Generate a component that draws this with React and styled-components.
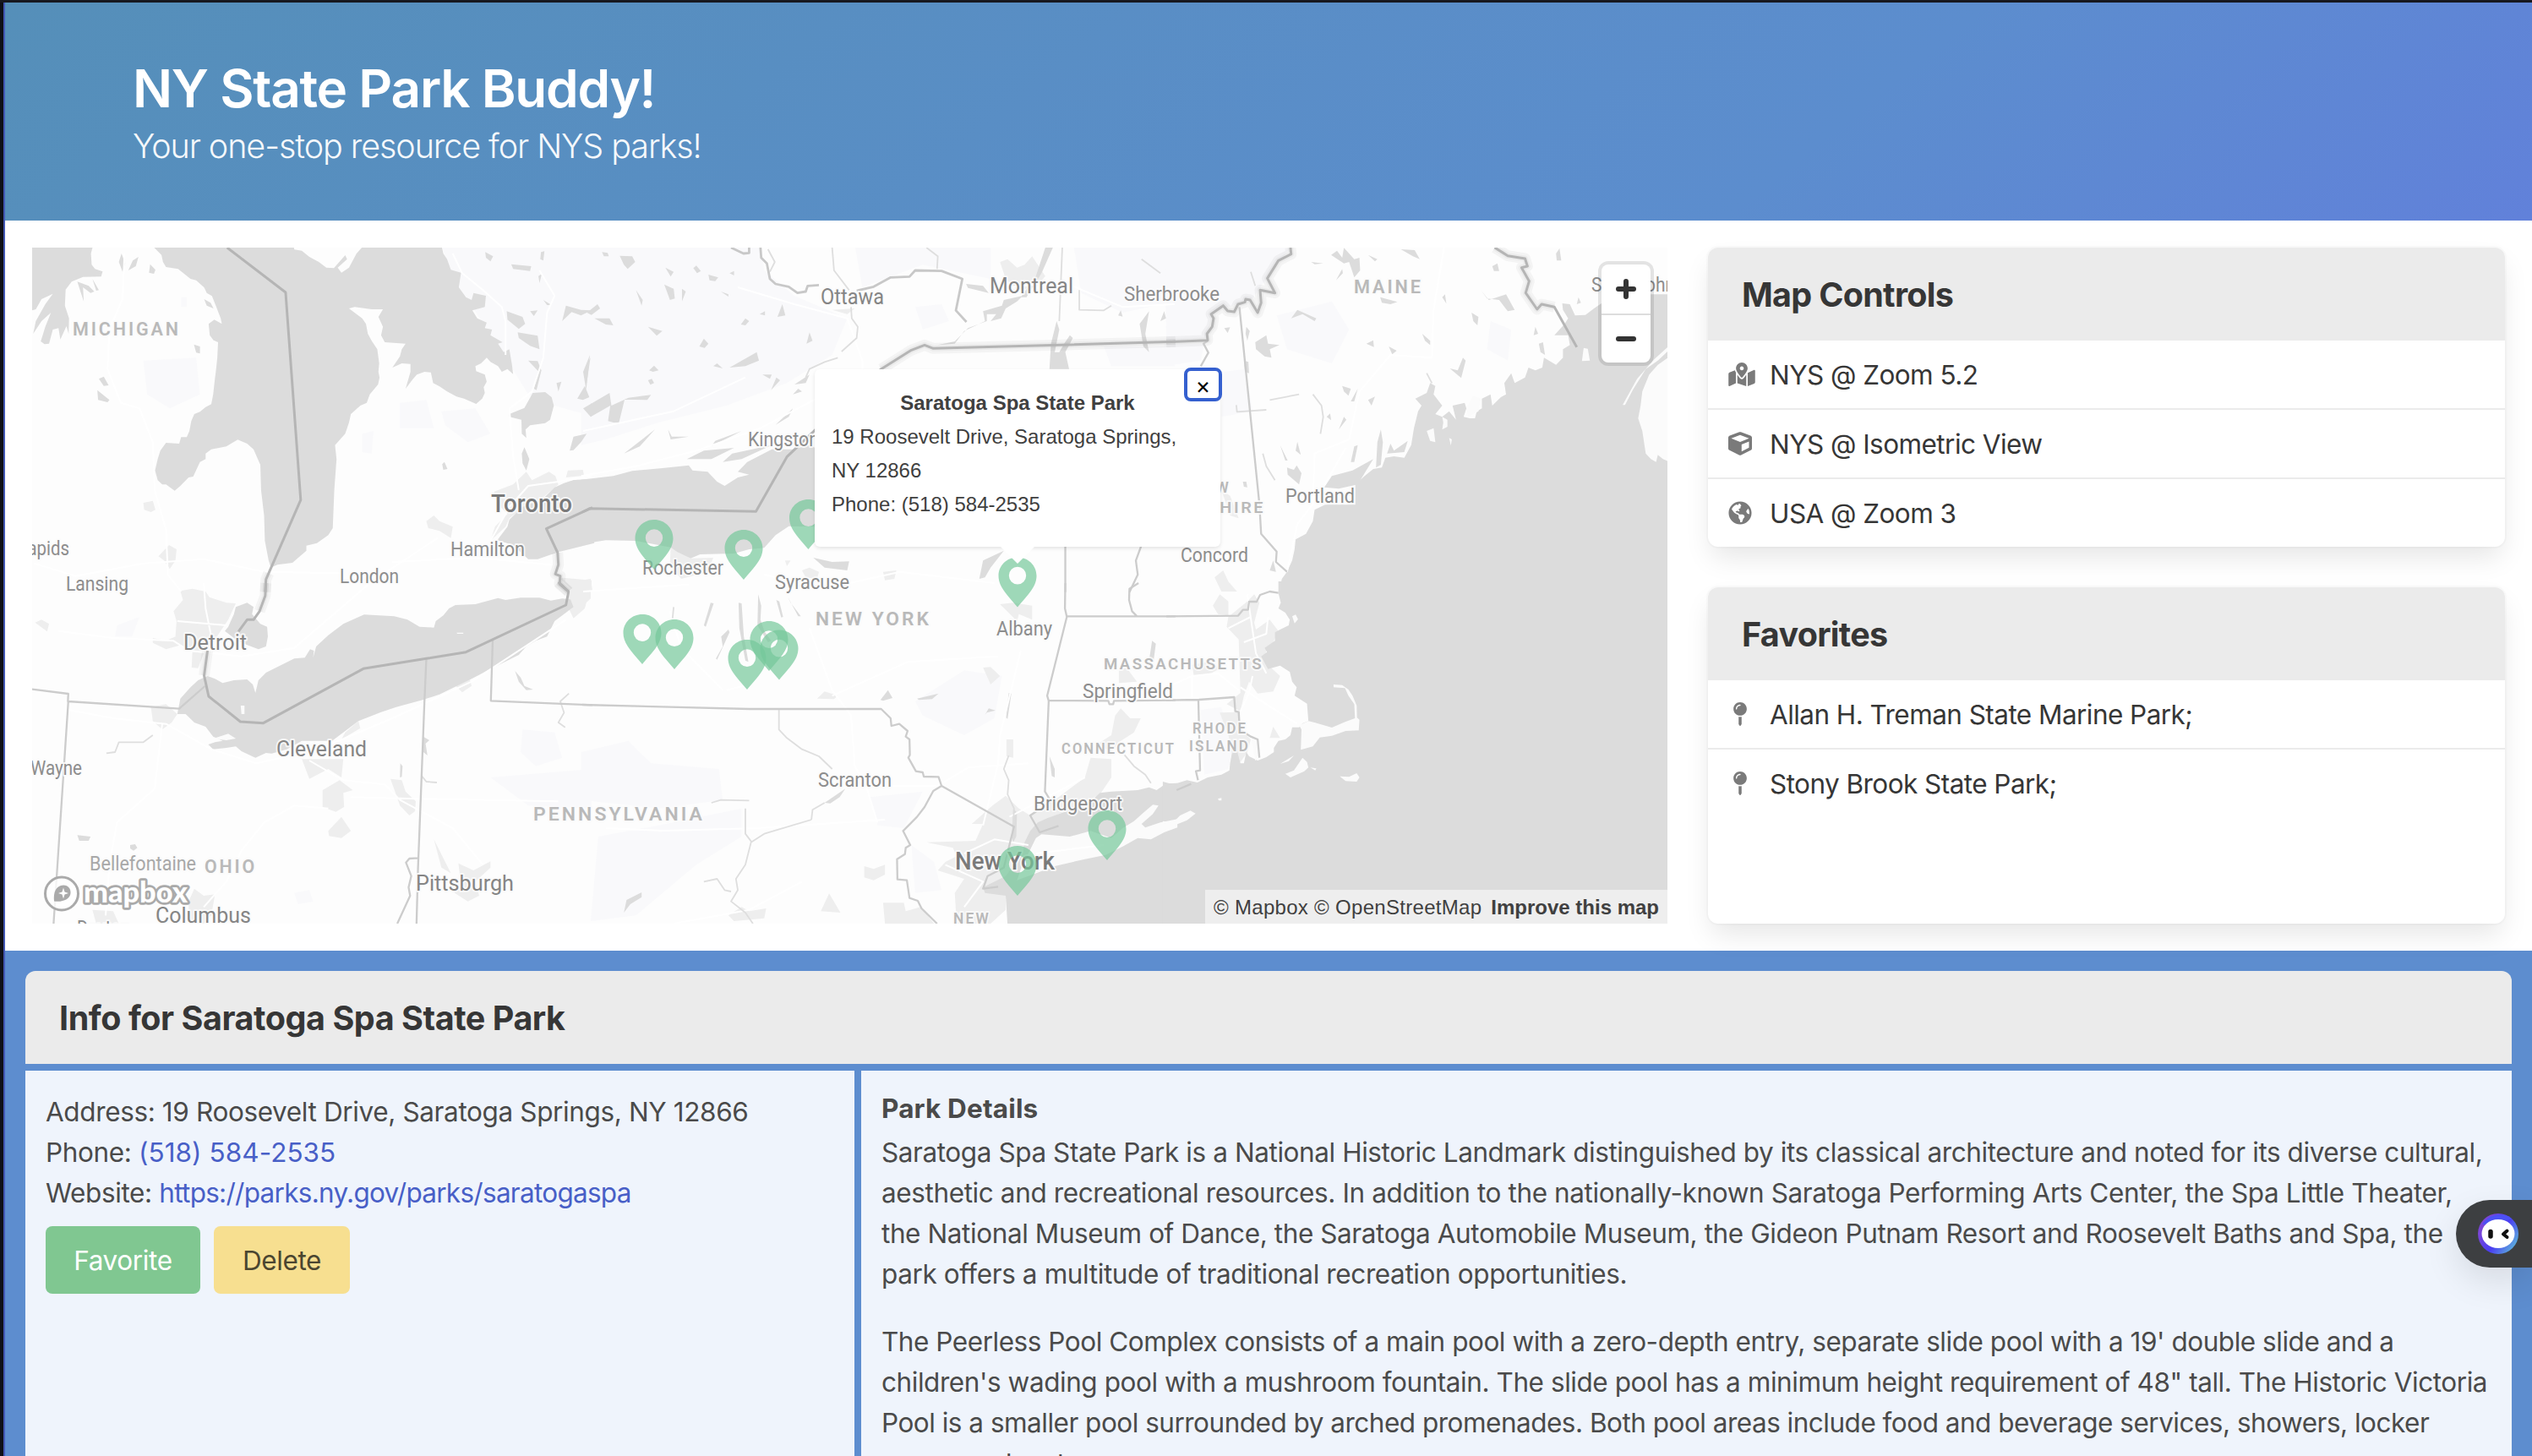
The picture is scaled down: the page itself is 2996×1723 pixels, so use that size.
import React from "react";
import styled, { createGlobalStyle } from "styled-components";
import { FaMapMarkedAlt, FaCube, FaGlobeAmericas, FaMapPin } from "react-icons/fa";

const GlobalStyle = createGlobalStyle`
  *, *::before, *::after { box-sizing: border-box; }
  html, body { margin: 0; padding: 0; overflow: hidden; background: #fff; }
  body {
    font-family: Inter, "Liberation Sans", sans-serif;
    font-size: 31.5px;
    line-height: 48px;
    color: #4a4a4a;
    -webkit-font-smoothing: antialiased;
  }
`;

const Page = styled.div`
  height: 1723px;
  overflow: hidden;
  border-top: 3px solid #17181f;
  display: flex;
  position: relative;
`;

const WindowEdge = styled.div`
  flex: 0 0 6px;
  background: #0f1017;
  border-right: 2px solid #4257b4;
`;

const Content = styled.div`
  flex: 1;
  min-width: 0;
`;

const Hero = styled.header`
  height: 258px;
  padding: 66px 151px 0;
  color: #fff;
  background: linear-gradient(141deg, #558fb9 0%, #5c8dce 71%, #6181da 100%);
`;

const HeroTitle = styled.h1`
  margin: 0 0 8px;
  font-size: 62px;
  line-height: 72px;
  font-weight: 600;
  letter-spacing: -1.25px;
`;

const HeroSubtitle = styled.p`
  margin: 0;
  font-size: 39.5px;
  line-height: 48px;
  font-weight: 350;
  letter-spacing: -1.08px;
  opacity: 0.94;
`;

const MapSection = styled.section`
  display: flex;
  gap: 48px;
  height: 864px;
  padding: 32px;
`;

const MapFrame = styled.div`
  position: relative;
  flex: 0 0 1935px;
  height: 800px;
  overflow: hidden;
  background: #fdfdfd;
  font-family: "Liberation Sans", Arial, sans-serif;
  font-size: 24px;
  line-height: 40px;
`;

const MapCanvas = styled.svg`
  display: block;
  width: 1935px;
  height: 800px;
`;

const ZoomGroup = styled.div`
  position: absolute;
  top: 20px;
  right: 20px;
  width: 58px;
  border-radius: 8px;
  background: #fff;
  box-shadow: 0 0 0 4px rgba(0, 0, 0, 0.1);
`;

const ZoomButton = styled.button`
  display: flex;
  align-items: center;
  justify-content: center;
  width: 58px;
  height: 58px;
  padding: 0;
  border: 0;
  border-top: ${(p) => (p.$divided ? "2px solid #ddd" : "0")};
  background: transparent;
`;

const Attribution = styled.div`
  position: absolute;
  right: 0;
  bottom: 0;
  height: 40px;
  width: 547px;
  padding: 1px 10px 0;
  display: flex;
  justify-content: space-between;
  white-space: nowrap;
  background: rgba(255, 255, 255, 0.5);
  color: #404040;
`;

const Credits = styled.span`
  letter-spacing: 0.3px;
`;

const Popup = styled.div`
  position: absolute;
  left: 926px;
  top: 144px;
  width: 480px;
  height: 210px;
  padding: 20px 20px 30px;
  border-radius: 6px;
  background: #fff;
  color: #404040;
  box-shadow: 0 2px 4px rgba(0, 0, 0, 0.1);
  &::after {
    content: "";
    position: absolute;
    left: 220px;
    top: 210px;
    border: 20px solid transparent;
    border-bottom-width: 0;
    border-top-color: #fff;
  }
`;

const PopupTitle = styled.div`
  font-weight: 700;
  text-align: center;
`;

const PopupClose = styled.button`
  position: absolute;
  right: -2px;
  top: -2px;
  width: 45px;
  height: 40px;
  padding: 3px 0 0;
  border: 4px solid #3560cf;
  border-radius: 8px;
  background: #fff;
  color: #000;
  font: 27px/28px Inter, sans-serif;
`;

const Sidebar = styled.aside`
  flex: 1;
  display: flex;
  flex-direction: column;
  gap: 48px;
`;

const Panel = styled.section`
  flex: ${(p) => (p.$grow ? 1 : "none")};
  border-radius: 12px;
  background: #fff;
  color: #363636;
  box-shadow: 0 16px 32px -4px rgba(10, 10, 10, 0.1), 0 0 0 2px rgba(10, 10, 10, 0.02);
`;

const PanelHeading = styled.h2`
  height: 110px;
  margin: 0;
  padding: 1px 40px 0;
  display: flex;
  align-items: center;
  border-radius: 12px 12px 0 0;
  background: #ebebeb;
  color: #363636;
  font-size: 39.5px;
  font-weight: 700;
  letter-spacing: -0.7px;
`;

const PanelRow = styled.a`
  display: flex;
  align-items: center;
  height: ${(p) => (p.$last ? 80 : 82)}px;
  padding: 2px 24px 0;
  border-bottom: ${(p) => (p.$last ? "0" : "2px solid #ebebeb")};
  letter-spacing: -0.55px;
`;

const PanelIcon = styled.span`
  flex: 0 0 28px;
  min-width: 0;
  height: 28px;
  margin: 0 21px 2px 0;
  display: flex;
  justify-content: ${(p) => (p.$wide ? "flex-start" : "center")};
  color: #7a7a7a;
  svg {
    flex: none;
    width: ${(p) => (p.$wide ? 32 : 28)}px;
    height: 28px;
  }
`;

const InfoSection = styled.section`
  height: 620px;
  padding: 24px 24px 0;
  background: #5d8dcf;
`;

const InfoHeading = styled(PanelHeading)`
  letter-spacing: -0.45px;
`;

const InfoColumns = styled.div`
  display: flex;
  gap: 8px;
  margin-top: 8px;
  height: 480px;
`;

const InfoBox = styled.div`
  flex: ${(p) => (p.$fixed ? "0 0 981px" : "1 1 0")};
  min-width: 0;
  padding: 25px 24px 0;
  background: #eff4fc;
  white-space: nowrap;
  letter-spacing: -0.37px;
`;

const Link = styled.a`
  color: #485fc7;
  letter-spacing: ${(p) => p.$track}px;
`;

const ButtonRow = styled.div`
  display: flex;
  gap: 16px;
  margin-top: 15px;
`;

const Button = styled.button`
  width: ${(p) => p.$width}px;
  height: 80px;
  padding: 1px 0 0;
  border: 0;
  border-radius: 8px;
  background: ${(p) => p.$bg};
  color: ${(p) => p.$fg};
  font: inherit;
  letter-spacing: inherit;
`;

const DetailsTitle = styled.h3`
  margin: 0 0 8px;
  font-size: 31.5px;
  line-height: 40px;
  font-weight: 700;
  letter-spacing: 0.15px;
`;

const Paragraph = styled.p`
  margin: 0 0 32px;
`;

const Line = styled.span`
  display: block;
  letter-spacing: ${(p) => p.$track}px;
`;

const ChatTab = styled.button`
  position: absolute;
  right: 0;
  top: 1417px;
  width: 90px;
  height: 80px;
  padding: 0 0 0 26px;
  display: flex;
  align-items: center;
  border: 0;
  border-radius: 40px 0 0 40px;
  background: #3d3f41;
  box-shadow: 0 16px 40px rgba(0, 0, 0, 0.1);
`;

/* Each sheet of the map has its own origin and its own horizontal resolution. */
const SHEETS = {
  huron: "translate(0 280) scale(0.446429 0.333333)",
  erie: "translate(0 690) scale(0.446429 0.333333)",
  ontario: "translate(690 280) scale(0.446429 0.333333)",
  hudson: "translate(690 690) scale(0.446429 0.333333)",
  maine: "translate(1380 280) scale(0.408163 0.333333)",
  atlantic: "translate(1380 690) scale(0.408163 0.333333)",
};

const TERRAIN = {
  huron:
    "M1170,30L1190,110 1216,180 1250,245 1345,440 1400,560 1470,600 1575,640V30ZM380,440L520,430 530,560 450,610 390,560ZM1060,590L1130,580 1150,680 1060,680ZM1170,620L1260,610 1300,700 1240,730 1180,670ZM480,215h15v35h-15ZM960,700L990,690 985,770 960,765Z",
  ontario:
    "M-5,30H470L480,120 560,210 700,290 660,420 540,520 380,600 200,660 60,720 -5,740ZM720,30H1080V150L900,100 740,180ZM1300,30H1568V230L1430,270 1320,200ZM880,250L950,240 970,300 900,330ZM1380,390H1568V460H1400Z",
  hudson:
    "M-5,600L120,560 180,640 360,660 370,770 200,800 -5,770ZM40,900L200,860 420,800 420,900 300,1000 140,1180 20,1200ZM880,420L1010,310 1110,330 1090,480 1010,540 900,470ZM760,760L900,740 850,870 780,860ZM870,930L930,990 950,1090 880,1100Z",
  maine:
    "M-5,39H360L290,150 250,220 130,270 120,360 0,370ZM-5,380L110,380 100,440 -5,460ZM320,280L480,230 530,330 480,450 350,400ZM940,300L1000,330 990,440 930,400ZM165,480L230,470 250,620 160,640Z",
  atlantic: "M100,450L160,440 190,600 180,660 110,680Z",
  erie: "M1385,520L1470,530 1490,620 1420,650 1380,600ZM1300,690L1568,660V800L1400,790ZM780,1100L820,1090 830,1130 790,1140ZM310,150L370,120 350,190 305,190Z",
};

const WATER = {
  huron: [
    "M85,30H247L241,60 243,100 252,115 272,124 268,142 220,143 190,160 174,188 172,245 183,290 182,345 176,318 160,365 155,325 140,330 130,380 118,382 108,372 120,320 135,270 110,300 88,345 95,300 120,240 140,203 110,222 95,258 85,262Z",
    "M402,30L428,65 432,90 440,108 472,115 505,150 520,155 545,185 560,205 572,245 585,290 588,310 568,295 553,310 556,350 566,368 578,375 576,430 572,480 570,500 565,560 560,595 545,605 530,622 515,630 507,655 502,690 495,712 480,712 475,735 440,732 425,760 418,790 411,830 418,865 430,880 440,880 463,902 478,885 500,855 512,852 530,800 545,790 545,770 560,755 600,745 630,721 655,735 672,755 690,810 692,900 700,990 702,1080 712,1150 718,1175 735,1165 775,1158 812,1115 812,1097 840,1088 870,1060 882,1035 886,900 892,790 888,740 915,700 925,660 930,630 955,600 972,590 980,560 1002,525 1006,500 1003,480 1005,450 1000,400 985,370 975,345 970,310 960,290 945,275 925,255 940,250 985,258 1015,258 1003,285 1015,320 1010,350 1020,375 1075,380 1065,400 1060,425 1040,465 1065,450 1088,452 1088,480 1075,540 1095,505 1105,490 1125,480 1142,482 1148,520 1165,532 1185,550 1210,568 1230,575 1262,594 1278,575 1285,555 1282,535 1290,515 1285,490 1262,478 1260,460 1275,450 1290,430 1300,445 1320,460 1330,480 1345,470 1360,488 1357,455 1350,400 1335,410 1320,380 1332,375 1300,350 1304,330 1285,325 1290,305 1265,290 1252,262 1285,250 1288,210 1255,200 1250,225 1235,215 1216,180 1222,128 1195,118 1185,80 1175,60 1170,30H965L945,60 925,110 905,128 895,110 920,80 915,66 885,112 865,110 845,90 820,72 800,50 780,46 778,30Z",
    "M1412,555L1445,552 1462,570 1468,600 1458,650 1445,662 1405,670 1393,685 1395,715 1383,700 1382,650 1350,640 1350,630 1390,608Z",
    "M1575,860L1520,864 1495,875 1470,890 1440,930 1385,960 1350,1005 1345,1030 1318,1078 1360,1095 1400,1145 1425,1145 1480,1120 1575,1088Z",
    "M315,90L322,60 332,95 325,125ZM340,120L352,85 367,72 360,105ZM395,128L398,98 412,118 408,132ZM205,160L235,175 250,195 240,200 220,180 222,230 212,190ZM245,150L262,190 255,192ZM541,180L568,205 572,218 548,200ZM541,222L558,235 566,255 548,245ZM514,383L530,390 530,415 520,412ZM262,505L275,497 288,528 275,530ZM258,545L290,580 285,588 260,580ZM1286,55L1307,70 1300,88 1288,75ZM1355,98L1408,105 1405,122 1360,115ZM1434,55L1443,52 1440,85 1432,80ZM1427,140L1436,132 1430,165ZM1440,225L1462,243 1450,243ZM1343,265L1385,285 1392,310 1375,328 1345,295ZM1405,265L1425,262 1415,282ZM1372,340L1425,352 1430,400 1405,388 1375,360ZM1400,440L1425,442 1435,475 1422,545 1415,540 1428,480ZM1490,300L1500,245 1540,260 1568,262 1540,280 1515,268ZM1475,520L1488,515 1480,550ZM1530,575L1550,530 1562,570 1545,580ZM1510,760L1520,710 1555,700 1540,730 1520,758ZM1383,770L1390,748 1403,790 1395,830 1385,805ZM1172,808L1178,800 1186,825 1175,828ZM1550,470L1565,430 1555,520ZM1555,620L1568,590V640Z",
  ],
  erie: [
    "M470,465L478,410 505,370 525,345 550,330 570,340 590,355 620,345 655,342 670,360 677,390 685,345 705,318 780,268 808,265 822,235 832,240 830,265 838,225 870,185 910,145 965,112 1045,118 1080,130 1112,155 1150,158 1155,135 1175,115 1190,90 1207,78 1260,75 1320,53 1340,60 1380,52 1430,52 1460,62 1490,55 1512,58 1520,85 1500,105 1470,135 1450,190 1420,205 1395,225 1375,255 1300,305 1250,340 1165,395 1120,415 1050,440 1010,458 950,490 910,530 880,560 800,560 760,590 720,605 705,603 677,620 640,597 625,580 600,585 565,590 552,573 570,565 590,560 565,545 545,510 515,495 492,465Z",
    "M605,155L620,110 625,85 655,70 672,85 668,110 690,145 708,155 710,190 705,225 685,235 655,220 625,200 596,170Z",
    "M205,895L240,900 235,915 210,915ZM345,930L358,927 364,940 354,950 345,942ZM1365,312L1380,335 1390,365 1413,378 1395,380 1375,350ZM1061,640L1067,650 1065,688 1060,690ZM1122,545L1138,558 1128,570 1133,612 1122,600Z",
  ],
  ontario: [
    "M-6,863L80,850 130,832 210,822 280,812 290,830 330,835 355,870 375,885 410,855 440,845 410,835 435,800 500,755 555,755 600,740 630,760V1030L545,1028 510,1060 480,1105 440,1110 400,1125 310,1128 285,1142 250,1120 232,1103 140,1080 60,1078 -6,1092Z",
    "M610,1140L660,1155 705,1153 700,1185 640,1175ZM50,55L65,58 68,70 55,70ZM97,68L130,70 138,90 118,115 108,100ZM218,110L240,125 232,142ZM292,112L300,103 312,122 302,130ZM332,135L358,145 350,158 335,155ZM388,130L400,122 400,138ZM215,170L240,185 243,220 230,225 222,195ZM365,195L385,205 385,213ZM140,190L158,225 155,245ZM262,185L272,195 262,230ZM10,270L38,240 45,255 22,278ZM30,290L70,290 80,315 60,312ZM172,320L210,335 195,352ZM308,390L320,362 332,380 322,395ZM418,312L430,290 440,300 430,315ZM515,285L528,240 536,280ZM468,275L482,265 482,280ZM592,380L600,340 608,370ZM175,475L188,458 200,475 185,480ZM172,510L182,505 188,520 178,526ZM345,460L355,450 370,468ZM388,465L460,410 466,440 430,460ZM498,545L512,500 522,510ZM475,490L500,490 495,505ZM556,560L570,540 580,550ZM0,610L70,555 75,600 120,572 180,562 170,580 110,578 95,660 80,660 66,655 72,600 20,640ZM108,770L190,685 150,745ZM225,685L235,710 280,710 232,720ZM350,725L420,690 340,745ZM510,668L556,610 545,640ZM560,525L600,490 590,520ZM0,480L18,420 8,545ZM395,770L500,740 420,790 370,800ZM1050,1215L1060,1150 1115,1115 1080,1175 1065,1210ZM275,790L320,760 400,750 340,790ZM1475,310L1500,265 1490,345 1500,410 1485,390ZM1530,300L1540,265 1545,290ZM1418,280L1425,262 1430,284ZM1015,168L1060,175 1075,200 1020,182Z",
    "M940,385L985,380 1010,335 1065,300 1060,265 1110,245 1115,225 1165,210 1150,230 1120,255 1108,290 1080,300 1095,275 1070,275 1070,300 1020,325 985,372ZM1160,215L1200,140 1225,39H1245L1215,130 1175,215ZM1236,470L1240,380 1255,300 1262,330 1250,410 1262,410 1275,380 1290,350 1298,360 1278,410 1288,470Z",
  ],
  hudson: [
    "M1575,710L1545,712 1520,735 1500,725 1470,735 1400,740 1370,745 1345,775 1300,800 1270,815 1230,835 1205,850 1185,880 1170,920 1165,960 1120,1040 1060,1080 1065,1100 1120,1110 1125,1215H1575Z",
    "M325,155L320,150 338,70 346,72ZM412,70L420,72 426,190 438,280 430,275 414,160ZM464,40L472,80 470,130 480,170 498,205 490,210 462,150ZM512,60L520,65 530,120 525,122ZM542,48L550,70 577,118 570,118ZM385,165L388,175 355,272 352,268 370,225 366,190ZM1128,390L1135,392 1125,482 1121,478ZM1065,468L1075,445 1093,452 1070,460ZM885,410L942,392 925,412 890,415ZM788,415L808,380 820,408 795,418ZM108,1170L115,1125 155,1098 155,1115 125,1140ZM1500,275L1508,205 1518,215 1512,275ZM1236,615L1250,660 1250,690 1242,685ZM640,780L695,730 680,760 655,782ZM1140,800L1150,815 1148,900 1140,920 1136,900Z",
  ],
  maine: [
    "M1460,205V1270H325L335,1215 350,1190 365,1150 372,1110 375,1075 405,1055 425,1010 430,970 460,952H548V880L575,850 600,825 625,820 635,785 660,780 690,785 710,740 718,680 730,620 740,600 722,575 755,555 765,520 780,530 775,560 800,600 780,630 800,640 820,620 840,650 830,600 865,590 870,610 862,640 880,645 895,645 900,620 915,610 915,575 940,560 945,600 970,570 985,560 980,520 1000,485 1010,520 1040,500 1050,465 1070,475 1090,465 1095,430 1130,455 1150,430 1150,400 1170,385 1165,350 1125,350 1140,330 1155,310 1165,290 1150,260 1148,237 1170,240 1185,280 1215,278 1240,255 1300,205Z",
    "M458,890L480,850 540,830 600,790 555,880 500,895ZM608,820L612,730 622,685 628,730 622,810ZM535,800L545,745 555,740 545,800ZM640,770L650,735 660,760 700,725 690,765Z",
    "M478,65L495,50 510,75 515,40 545,80 560,75 562,120 545,145 530,90 515,95ZM680,45L720,48 735,80 715,70ZM585,65L612,80 605,88ZM420,90L455,95 430,98ZM492,155L510,115 512,130ZM620,215L670,232 650,240 625,235ZM800,215L808,205 812,238ZM945,105L960,95 965,122 950,122ZM362,290L380,260 435,290 430,300 395,275ZM168,325L185,322 178,342ZM258,375L290,350 295,380 328,385 300,400 305,430 285,425 260,400ZM232,320L242,335 235,370 230,345ZM580,380L600,368 602,392ZM645,390L668,405 655,418ZM742,345L765,370 765,385 750,370ZM822,468L845,475 860,430 868,440 855,502ZM510,530L535,540 528,565 515,550ZM535,585L555,540 545,585ZM585,580L605,568 595,600ZM500,685L515,640 522,650ZM330,740L352,795 345,795ZM375,760L380,728 390,775ZM350,820L370,828 378,812 392,840 385,880 352,845ZM465,640L475,628 478,652ZM222,870L232,870 235,890 225,888ZM885,270L905,285 902,315 890,300ZM912,190L935,225 985,205 1010,260 990,265 965,225 930,220ZM1130,60L1140,42 1145,85 1132,85ZM1190,240L1195,215 1202,235ZM1065,350L1070,320 1078,345ZM1080,380L1092,375 1098,420 1085,410ZM300,1185L310,1150 318,1190ZM225,440L238,445 240,485 228,480Z",
  ],
  atlantic: [
    "M325,-6H1460V1215H-10V705L20,715 60,700 90,708 120,690 160,680 183,665 185,640 190,605 205,595 215,640 225,640 232,600 240,615 265,630 290,618 312,600V585L325,560 345,555 360,540 365,512 385,512 395,498 412,490 408,428 372,400 378,370 365,350 358,315 330,293 295,305 275,260 292,245 285,230 315,205V175L330,165 355,150 358,130 345,105 325,90 332,70 325,35Z",
  ],
};

const LAND = {
  maine:
    "M1460,425L1425,455 1400,490 1380,550 1375,600 1368,645 1380,690 1390,770 1405,790 1420,800 1425,775 1440,790 1460,800ZM1460,385L1415,435 1365,505 1323,598 1330,598 1352,545 1390,470 1425,440 1460,400ZM1210,395L1222,398 1228,440 1205,442ZM800,640L815,650 815,675 800,685 803,660ZM755,690L775,680 780,730 765,725ZM820,715L828,720 825,742ZM870,610L890,565 912,575 905,620 875,640Z",
  atlantic:
    "M485,360L510,362 528,378 540,400 552,435 553,478 560,485 558,523 520,525 480,542 445,548 425,580 390,592 392,520 385,505 412,490 430,495 480,513 520,492 547,480 545,430 528,400 518,373 485,370ZM345,677L370,665 395,620 408,635 412,655 400,668 360,690ZM503,686L530,688 552,675 560,690 552,705 520,703ZM330,642L370,612 355,632ZM365,118L375,112 382,128 372,143ZM-10,845L20,850 40,825 70,808 85,818 60,842 20,862 -10,878ZM150,765L160,763 160,772 152,772ZM246,550L262,555 270,620 258,630ZM418,655L435,658 432,665Z",
  hudson:
    "M1150,1055L1160,1015 1200,905 1215,892 1290,900 1345,880 1400,905 1430,870 1460,845 1485,815 1510,787 1525,790 1510,820 1480,855 1490,868 1530,850 1575,838V868L1540,885 1505,910 1470,905 1430,935 1385,965 1330,980 1250,1005 1210,1025Z",
  erie: "M638,435L648,435 648,465 640,465ZM565,552L605,535 625,552 600,558ZM1210,176H1228V180H1212Z",
};

const URBAN = {
  huron:
    "M1300,1080L1312,1030 1345,985 1320,950 1310,905 1360,880 1395,835 1410,865 1455,835 1472,850 1480,880 1440,925 1385,965 1350,1000 1340,1030ZM1500,855L1505,830 1545,828 1548,848ZM1130,1010L1150,990 1165,1010 1200,1030 1195,1070 1165,1045 1135,1035ZM420,1135L448,1095 468,1110 465,1150 450,1180 435,1150ZM380,945L405,938 412,970 400,978 382,970ZM1480,1210L1568,1220V1260H1520Z",
  erie: "M460,100L485,60 478,28 510,20 545,30 555,50 600,70 625,72 605,130 575,190 540,250 525,302 508,300 510,240 480,220 440,235 405,212 405,195 440,205 465,190 468,135ZM93,140L110,130 130,145 125,172ZM400,440L440,430 470,465 455,495 430,520 405,490ZM800,625L910,625 905,690 870,660 820,695ZM855,735L900,700 935,735 910,745 912,795 890,812 855,795ZM870,880L905,830 930,880 905,905 872,898ZM1035,695L1065,700 1075,740 1102,775 1100,810 1085,825 1060,790ZM950,490L955,515 905,555 915,530ZM1500,70L1520,0H1568L1550,90 1520,125ZM1150,910L1195,1030 1170,1010ZM1215,995L1255,1020 1300,988 1300,1010 1260,1060 1270,1110 1240,1130 1205,1100 1220,1050ZM500,1130L515,1085 540,1110 570,1105 560,1180 540,1209H500ZM245,1160L300,1165 315,1209H255ZM1208,365L1245,340 1250,365 1225,388Z",
  ontario:
    "M232,1103L285,1142 345,1140 330,1190 260,1215 230,1170ZM1105,90L1125,80 1150,110 1170,100 1190,70 1225,140 1200,180 1150,190 1120,150ZM580,1185L600,1175 625,1190 620,1215 590,1210ZM795,1190L830,1185 825,1215 800,1220ZM660,260L720,255 700,275ZM-5,1220L20,1215 25,1260H-5ZM535,1150L550,1150 540,1170Z",
  hudson:
    "M1060,855L1030,855 1085,790 1120,755 1155,800 1185,825 1250,770 1330,690 1345,620 1400,625 1400,690 1370,750 1230,840 1200,880 1160,960 1215,900 1290,900 1350,890 1420,910 1330,965 1210,1010 1130,1050 1065,1085 1120,1110 1120,1160 1080,1209H990L985,1100 1010,1050 940,1020 960,990 990,970 980,940 910,920 1040,915ZM1365,570L1400,540 1410,470 1425,445 1450,480 1478,480 1460,530 1420,565 1400,600ZM1105,75L1140,70 1190,80 1190,130 1155,110 1150,135ZM620,410L640,385 675,400 665,412ZM745,1005L770,1015 800,1000 800,1035 770,1055 745,1045ZM630,1165L652,1102 682,1170ZM795,1135L850,1135 855,1165 895,1150 930,1209H800ZM385,1180L420,1150 440,1165 485,1155 480,1190 400,1200ZM1122,555H1140V620L1122,615ZM1420,310L1440,300 1468,350 1420,355ZM0,20L20,0V55L0,80ZM1060,300L1080,298 1105,330 1080,360Z",
  maine: "M140,1210L165,1185 180,1225 205,1260H160ZM175,1230h10v30h-10ZM160,900L185,920 210,1000 185,990Z",
  atlantic:
    "M135,80L155,40 180,65 180,115 150,110ZM180,120L235,65 255,40 270,70 255,140 260,165 300,130 325,170 310,210 290,240 285,280 330,330 310,385 265,392 240,350 225,400 215,455 175,430 215,390 210,200 175,155ZM155,460L210,458 215,520 245,555 235,600 215,635 190,605 180,540ZM300,550L310,510 330,550ZM75,290L120,280 160,300 130,320 80,330Z",
};

const ROADS = {
  huron:
    "M1200,60L1225,130 1280,190 1330,250 1340,300 1340,420M1430,120L1470,210 1450,270 1440,430 1410,550 1350,610 1360,780 1375,900M1300,1080L1350,960 1400,885 1480,870 1568,850M330,60L325,220 290,330 285,470 320,590 370,610 405,730 410,900 440,1040 445,1200 480,1260M90,1160L200,1205 380,1160 540,1145 700,1190 900,1195M1040,1155L1260,1140 1460,1165M980,1230L1160,1070",
  erie: "M155,170L300,195 460,205 500,240 640,260 780,230 920,70 980,0M181,450L300,480 440,500 560,590 680,640 780,610 880,570 1040,480 1250,350 1500,130M430,500L410,730 310,850 290,1000 280,1180M540,0L545,90 560,190M470,135L600,150M820,630L910,700 1020,715 1060,770 1200,870 1280,1000M870,800L780,790 700,850 640,950 600,1060 540,1150M930,760L1080,765 1480,775",
  ontario:
    "M-5,850L140,815 300,760 470,680 640,560M410,180L560,240 700,290 740,440 740,470M0,690L240,620 430,500M1130,180L1270,160 1430,250 1568,240M480,1200L640,1250 840,1190 1090,1230",
  hudson:
    "M0,30L280,5M230,100L260,230 370,380M600,160L660,380 710,470 720,650 750,720 780,850M380,380L440,360M660,400L860,280 1100,260M1160,240L1105,540 1100,640 1060,860M690,720L940,720 1020,655 1180,640M200,880L460,870 800,840M220,880L60,870M580,1060L440,1160 240,1209M1010,960L1090,910 1180,930M960,1000L1060,1060 1010,1150M1130,830L1330,690M1200,960L1380,930",
  maine:
    "M805,39L775,260 770,430 650,420 560,550 530,720 430,770 425,950 380,1020 350,1190M460,880L520,750",
  atlantic:
    "M235,40L260,250 290,320M215,370L290,430 380,500M180,160L245,120M225,210L290,180 295,120M75,330L150,320 210,380M0,370L75,330 75,414M215,455L240,390 250,330",
};

const STATE_LINES = {
  erie: "M85,377L181,393 180,420 475,446 543,366M181,420L142,1209M1130,268L1125,420 1117,700 1108,1010 1104,1209M1306,200L1301,418 1570,433M1108,976L1085,978 1076,992 1090,1040 1083,1080 1087,1110 1053,1209",
  ontario: "M1278,1095V1262M1480,1095L1465,1150 1470,1200 1448,1262",
  hudson:
    "M-2,432L230,440 440,447H790L815,480 817,507 838,500 860,525 855,545 865,555 866,610 862,620 882,668 900,672 903,687 942,688 950,720 1142,865 1115,1010 1072,1040 1060,1085 1100,1078M950,720L928,738 905,795 885,830 848,880 867,930 855,940 853,962 832,980 833,1052 858,1055 865,1118 887,1128 897,1155 938,1209M1278,0L1277,90 1282,120 1230,400 1234,418 1224,740 1240,775 1185,825 1210,885 1260,862M1282,118H1570M1234,417L1392,418 1395,430H1405L1407,418 1570,416M1472,0L1448,20 1447,60 1455,100 1468,118",
  maine: "M212,250L270,950 275,1055 320,1118 318,1155 350,1190M120,370L108,380 122,412 100,460",
  atlantic:
    "M0,118L208,116 222,95H237L240,66H262L272,42 300,30 325,35M0,416L95,414 197,405 200,455 210,458 213,520 245,545 265,555 270,620M93,414L98,665 86,668 92,700M72,713L30,735",
};

const RIVERS = {
  erie: "M405,540L380,565 315,565 305,600 282,604M1508,392L1485,420 1495,460 1480,495 1498,512M1118,685L1130,705 1158,708",
  ontario:
    "M660,39L665,120 705,190M710,250L712,290 728,320 725,360 685,408M675,430L640,445 600,470 590,500M1270,39L1262,300M1480,80L1530,130M1315,190V260L1380,262 1400,245M910,39L940,70 938,115M490,45L508,90 495,125",
  hudson:
    "M519,450V520L540,550 580,590 625,615 660,660M605,840L480,890 445,920 430,1000 405,1050 410,1090 392,1130 430,1170 450,1209M605,840L608,805 640,780M340,780L365,770 440,772M430,800L430,890 447,920M1128,612L1115,660 1128,700 1125,750 1142,800 1140,870M240,85L237,125M320,1060L355,1050 375,1090 392,1095M1435,610L1460,650 1490,680 1505,710",
  maine: "M203,598L205,622 290,615M300,580L385,560M425,560L450,600 455,640 447,700M280,770L290,815 315,865M245,125L258,175M755,485L770,520",
};

const COUNTRY_LINES = {
  huron: "M602,39L757,198 797,935 705,1217 703,1262M1570,962L1448,1037 1478,1122 1480,1165 1472,1198 1485,1205 1483,1233 1508,1262",
  erie: "M705,0L703,45 688,100 672,130H655L632,172M550,240L541,328 553,402 637,492 698,497 963,304 1130,268 1235,245 1500,78 1507,30 1480,-4",
  ontario: "M-2,978L18,965 458,976 540,782 620,680 790,470 870,403 905,385 928,397 1570,373",
  maine:
    "M0,374L120,368 118,345 133,320 137,290 130,275 165,245 178,264 197,267 208,240 228,233 230,222 243,225 265,270 275,235 272,190 315,200 293,148 325,85 362,62 360,39M952,39L990,68 1040,78 1047,105 1030,110 1052,158 1042,200 1075,258 1088,240 1125,250 1190,392",
};

/* Soft shading only follows the border where it runs over land. */
const BORDER_SHADE = {
  huron: "M1478,1122L1480,1165 1472,1198 1485,1205 1483,1233 1508,1262M712,1195L705,1217 703,1262",
  erie: "M705,0L703,45 688,100M550,240L541,328M1507,30L1480,-4",
  ontario: "M790,470L870,403 905,385 928,397 1570,373",
  maine:
    "M0,374L120,368 118,345 133,320 137,290 130,275 165,245 178,264 197,267 208,240 228,233 230,222 243,225 265,270 275,235 272,190 315,200 293,148 325,85 362,62 360,39M952,39L990,68 1040,78 1047,105 1030,110 1052,158 1042,200 1075,258 1088,240 1125,250",
};

const PROVINCE_LINES = {
  ontario:
    "M392,39L425,60 440,58V39M470,39L472,75 487,95 495,150 510,168 545,178 568,200 590,195 595,175 625,172M725,192L770,178 815,145 865,142 880,120 950,122 1005,150 988,262 1016,303",
};

const STYLES = {
  city: { size: 24, fill: "#8d8d8d", weight: 400 },
  big: { size: 26, fill: "#858585", weight: 400 },
  metro: { size: 29, fill: "#7a7a7a", weight: 500 },
  faint: { size: 24, fill: "#a8a8a8", weight: 400 },
  state: { size: 22.5, fill: "#b9b9b9", weight: 600, spacing: 3 },
  small: { size: 19, fill: "#b9b9b9", weight: 600, spacing: 2.4 },
};

/* text, kind, left, right, baseline */
const LABELS = [
  ["MICHIGAN", "state", 86, 214, 397],
  ["Rapids", "city", 20, 82, 657],
  ["Lansing", "city", 78, 152, 699],
  ["London", "city", 402, 472, 690],
  ["Hamilton", "city", 533, 621, 658],
  ["Toronto", "metro", 581, 677, 606],
  ["Detroit", "big", 217, 292, 769],
  ["Cleveland", "big", 327, 434, 895],
  ["Wayne", "city", 36, 97, 917],
  ["Bellefontaine", "faint", 106, 232, 1030],
  ["OHIO", "state", 242, 304, 1033],
  ["Columbus", "big", 184, 297, 1092],
  ["Dayton", "city", 91, 154, 1106],
  ["Pittsburgh", "big", 492, 608, 1054],
  ["PENNSYLVANIA", "state", 631, 834, 971],
  ["Ottawa", "big", 971, 1046, 360],
  ["Montreal", "big", 1171, 1270, 347],
  ["Sherbrooke", "city", 1330, 1443, 356],
  ["Kingston", "city", 885, 969, 528],
  ["Rochester", "city", 760, 856, 680],
  ["Syracuse", "city", 917, 1005, 697],
  ["NEW YORK", "state", 965, 1102, 740],
  ["Albany", "city", 1179, 1245, 752],
  ["MASSACHUSETTS", "small", 1306, 1495, 792],
  ["Springfield", "city", 1281, 1388, 826],
  ["CONNECTICUT", "small", 1256, 1391, 892],
  ["RHODE", "small", 1411, 1476, 868],
  ["ISLAND", "small", 1407, 1479, 889],
  ["Scranton", "city", 968, 1055, 931],
  ["Bridgeport", "city", 1223, 1328, 959],
  ["New York", "metro", 1130, 1248, 1029],
  ["NEW", "small", 1128, 1172, 1093],
  ["MAINE", "state", 1602, 1684, 347],
  ["Saint John", "city", 1883, 1982, 345],
  ["Portland", "city", 1521, 1603, 595],
  ["Concord", "city", 1397, 1477, 665],
  ["NEW", "small", 1412, 1456, 583],
  ["HAMPSHIRE", "small", 1361, 1497, 607],
];

/* centre x, top y */
const MARKERS = [
  [774, 615], [880, 627], [956.5, 591], [1204, 659.5], [760, 727], [798, 733],
  [884, 757], [910, 735], [922, 745.5], [1204, 1001], [1310, 959],
];

const PIN =
  "M0,0C12.5,0 22.5,9.6 22.5,22C22.5,36 10,46.5 0,59C-10,46.5 -22.5,36 -22.5,22C-22.5,9.6 -12.5,0 0,0ZM0,11.2A10.2,10.4 0 1 0 0,32A10.2,10.4 0 1 0 0,11.2Z";

const Layer = ({ shapes, ...style }) => (
  <g {...style}>
    {Object.entries(shapes).map(([sheet, d]) => (
      <g key={sheet} transform={SHEETS[sheet]}>
        {[].concat(d).map((path, i) => (
          <path key={i} d={path} vectorEffect="non-scaling-stroke" />
        ))}
      </g>
    ))}
  </g>
);

const line = { fill: "none", strokeLinejoin: "round", strokeLinecap: "butt" };

const ParkMap = () => (
  <MapCanvas viewBox="38 293 1935 800">
    <rect x="38" y="293" width="1935" height="800" fill="#fdfdfd" />
    <Layer shapes={TERRAIN} fill="#f9f9fb" />
    <Layer shapes={URBAN} fill="#eeeeee" />
    <Layer shapes={WATER} fill="#dcdcdc" fillRule="nonzero" />
    <Layer shapes={LAND} fill="#fbfbfb" />
    <Layer shapes={ROADS} {...line} stroke="#ffffff" strokeWidth="2" />
    <Layer shapes={RIVERS} {...line} stroke="#dedede" strokeWidth="1.8" />
    <Layer shapes={BORDER_SHADE} {...line} stroke="#000" strokeOpacity="0.035" strokeWidth="13" />
    <Layer shapes={BORDER_SHADE} {...line} stroke="#000" strokeOpacity="0.035" strokeWidth="7" />
    <Layer shapes={STATE_LINES} {...line} stroke="#cccccc" strokeWidth="2.3" />
    <Layer shapes={PROVINCE_LINES} {...line} stroke="#c8c8c8" strokeWidth="2.8" />
    <Layer shapes={COUNTRY_LINES} {...line} stroke="#b5b5b5" strokeWidth="3" />
    <g fontFamily="Roboto, sans-serif" stroke="#fbfbfb" strokeOpacity="0.85" strokeWidth="4" strokeLinejoin="round" paintOrder="stroke">
      {LABELS.map(([text, kind, x0, x1, y]) => {
        const s = STYLES[kind];
        return (
          <text
            key={text + x0}
            x={x0}
            y={y}
            fontSize={s.size}
            fontWeight={s.weight}
            letterSpacing={s.spacing}
            fill={s.fill}
            textLength={x1 - x0}
            lengthAdjust="spacingAndGlyphs"
          >
            {text}
          </text>
        );
      })}
    </g>
    <g>
      <circle cx="73" cy="1057.5" r="19.5" fill="#fff" fillOpacity="0.8" stroke="#aaa" strokeWidth="3" />
      <path d="M64,1066.500C63,1056 66,1048 75,1047.500C81,1047.500 84,1052 83.500,1057C83,1064 74,1068 64,1066.500Z" fill="#aaa" />
      <path d="M75,1050.500L76.500,1055.500 81,1057 76.500,1058.500 75,1063.500 73.500,1058.500 69,1057 73.500,1055.500Z" fill="#fff" />
      <text
        x="99"
        y="1067.500"
        fontFamily="Lato, sans-serif"
        fontSize="34"
        fontWeight="900"
        fill="#fff"
        stroke="#aaa"
        strokeWidth="5.500"
        strokeLinejoin="round"
        paintOrder="stroke"
        textLength="123"
        lengthAdjust="spacingAndGlyphs"
      >
        mapbox
      </text>
    </g>
    <g fill="#75c89a" fillOpacity="0.7" fillRule="evenodd">
      {MARKERS.map(([x, y]) => (
        <path key={`${x}-${y}`} d={PIN} transform={`translate(${x} ${y})`} />
      ))}
    </g>
  </MapCanvas>
);

const ZoomGlyph = ({ plus }) => (
  <svg width="24" height="24" viewBox="-12 -12 24 24" stroke="#333" strokeWidth="6" strokeLinecap="round">
    <path d={plus ? "M-9,0H9M0,-9V9" : "M-9,0H9"} />
  </svg>
);

const ChatFace = () => (
  <svg width="48" height="48" viewBox="0 0 48 48">
    <defs>
      <linearGradient id="ring" x1="0.15" y1="0.3" x2="1" y2="0.85">
        <stop offset="0" stopColor="#7a45d8" />
        <stop offset="0.45" stopColor="#4a3df2" />
        <stop offset="1" stopColor="#5fc3d8" />
      </linearGradient>
    </defs>
    <circle cx="24" cy="24" r="24" fill="url(#ring)" />
    <path d="M5,13A24,24 0 0 1 40,6L24,12Z" fill="#4c50f5" />
    <ellipse cx="24" cy="24" rx="19.500" ry="17" fill="#fff" />
    <path d="M15,21.500V27" stroke="#111" strokeWidth="5.500" strokeLinecap="round" />
    <path d="M34.500,20.500L30,24.500 34.500,28" stroke="#111" strokeWidth="4" strokeLinecap="round" strokeLinejoin="round" fill="none" />
  </svg>
);

const CONTROLS = [
  { icon: FaMapMarkedAlt, label: "NYS @ Zoom 5.2", wide: true },
  { icon: FaCube, label: "NYS @ Isometric View" },
  { icon: FaGlobeAmericas, label: "USA @ Zoom 3" },
];

const FAVORITES = ["Allan H. Treman State Marine Park;", "Stony Brook State Park;"];

/* text, letter spacing */
const DETAILS = [
  [
    ["Saratoga Spa State Park is a National Historic Landmark distinguished by its classical architecture and noted for its diverse cultural,", -0.42],
    ["aesthetic and recreational resources. In addition to the nationally-known Saratoga Performing Arts Center, the Spa Little Theater,", -0.39],
    ["the National Museum of Dance, the Saratoga Automobile Museum, the Gideon Putnam Resort and Roosevelt Baths and Spa, the", -0.41],
    ["park offers a multitude of traditional recreation opportunities.", -0.39],
  ],
  [
    ["The Peerless Pool Complex consists of a main pool with a zero-depth entry, separate slide pool with a 19' double slide and a", -0.46],
    ["children's wading pool with a mushroom fountain. The slide pool has a minimum height requirement of 48\" tall. The Historic Victoria", -0.44],
    ["Pool is a smaller pool surrounded by arched promenades. Both pool areas include food and beverage services, showers, locker", -0.5],
    ["rooms and restrooms.", -0.42],
  ],
];

export default function App() {
  return (
    <Page>
      <GlobalStyle />
      <WindowEdge />
      <Content>
        <Hero>
          <HeroTitle>NY State Park Buddy!</HeroTitle>
          <HeroSubtitle>Your one-stop resource for NYS parks!</HeroSubtitle>
        </Hero>

        <MapSection>
          <MapFrame>
            <ParkMap />
            <Popup>
              <PopupTitle>Saratoga Spa State Park</PopupTitle>
              <div>19 Roosevelt Drive, Saratoga Springs, NY 12866</div>
              <div>Phone: (518) 584-2535</div>
              <PopupClose>×</PopupClose>
            </Popup>
            <ZoomGroup>
              <ZoomButton><ZoomGlyph plus /></ZoomButton>
              <ZoomButton $divided><ZoomGlyph /></ZoomButton>
            </ZoomGroup>
            <Attribution>
              <Credits>© Mapbox © OpenStreetMap</Credits>
              <b>Improve this map</b>
            </Attribution>
          </MapFrame>

          <Sidebar>
            <Panel>
              <PanelHeading>Map Controls</PanelHeading>
              {CONTROLS.map(({ icon: Icon, label, wide }, i) => (
                <PanelRow key={label} $last={i === CONTROLS.length - 1}>
                  <PanelIcon $wide={wide}><Icon /></PanelIcon>
                  {label}
                </PanelRow>
              ))}
            </Panel>
            <Panel $grow>
              <PanelHeading>Favorites</PanelHeading>
              {FAVORITES.map((label, i) => (
                <PanelRow key={label} $last={i === FAVORITES.length - 1}>
                  <PanelIcon><FaMapPin /></PanelIcon>
                  {label}
                </PanelRow>
              ))}
            </Panel>
          </Sidebar>
        </MapSection>

        <InfoSection>
          <InfoHeading>Info for Saratoga Spa State Park</InfoHeading>
          <InfoColumns>
            <InfoBox $fixed>
              <div>Address: 19 Roosevelt Drive, Saratoga Springs, NY 12866</div>
              <div>Phone: <Link $track={0.05}>(518) 584-2535</Link></div>
              <div>Website: <Link $track={-0.72}>https://parks.ny.gov/parks/saratogaspa</Link></div>
              <ButtonRow>
                <Button $width={183} $bg="#80c791" $fg="#fff">Favorite</Button>
                <Button $width={161} $bg="#f7df90" $fg="#4b4630">Delete</Button>
              </ButtonRow>
            </InfoBox>
            <InfoBox>
              <DetailsTitle>Park Details</DetailsTitle>
              {DETAILS.map((lines) => (
                <Paragraph key={lines[0][0]}>
                  {lines.map(([text, track]) => (
                    <Line key={text} $track={track}>{text}</Line>
                  ))}
                </Paragraph>
              ))}
            </InfoBox>
          </InfoColumns>
        </InfoSection>
      </Content>
      <ChatTab><ChatFace /></ChatTab>
    </Page>
  );
}
